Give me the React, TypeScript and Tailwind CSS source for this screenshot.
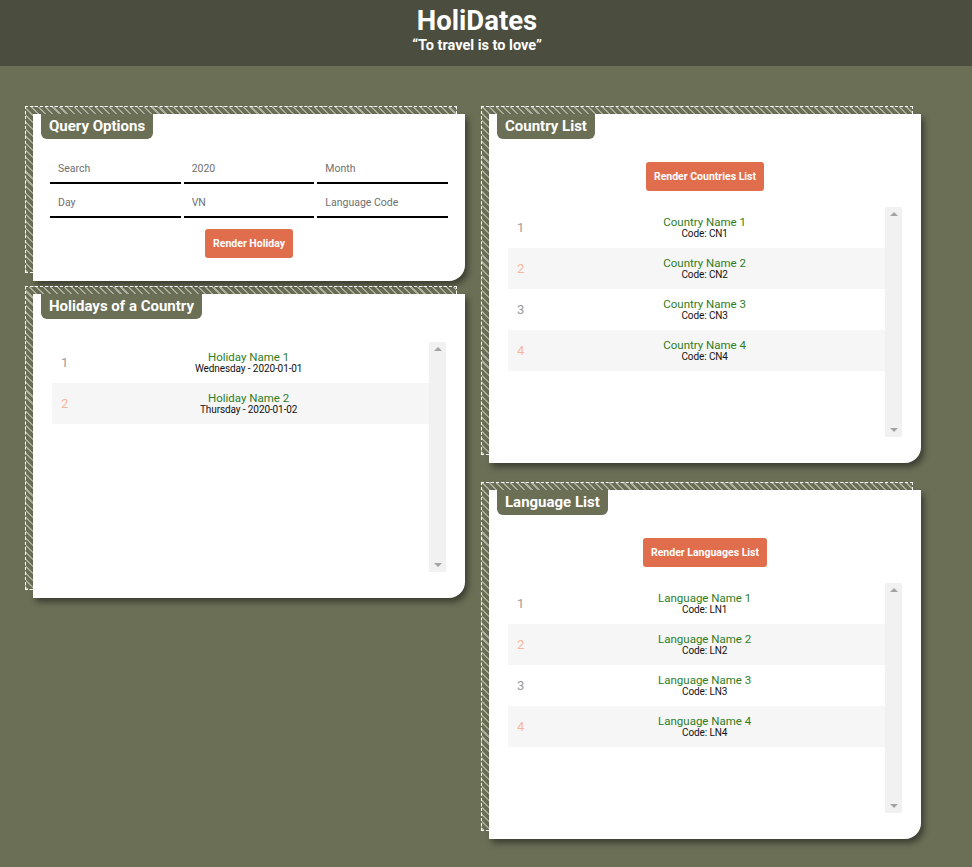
import React from 'react';

type Item = { name: string; sub: string };

const holidays: Item[] = [
  { name: 'Holiday Name 1', sub: 'Wednesday - 2020-01-01' },
  { name: 'Holiday Name 2', sub: 'Thursday - 2020-01-02' },
];

const countries: Item[] = [1, 2, 3, 4].map((n) => ({ name: `Country Name ${n}`, sub: `Code: CN${n}` }));
const languages: Item[] = [1, 2, 3, 4].map((n) => ({ name: `Language Name ${n}`, sub: `Code: LN${n}` }));

const Panel: React.FC<{ title: string; className?: string; children: React.ReactNode }> = ({ title, className = '', children }) => (
  <div className={`relative w-[432px] ${className}`}>
    {/* hatched dashed frame sitting behind the card */}
    <div className="absolute -top-2 -left-2 right-2 bottom-2 border border-dashed border-white bg-[repeating-linear-gradient(45deg,rgba(255,255,255,0.45)_0px,rgba(255,255,255,0.45)_1.5px,transparent_1.5px,transparent_5px)]" />
    <div className="relative h-full bg-white rounded-br-[16px] shadow-[3px_4px_6px_rgba(0,0,0,0.45)] flex flex-col">
      <div className="ml-2 self-start h-[25px] px-2 flex items-center bg-[#6b6f56] rounded-b-[6px] text-white font-bold text-[15px] leading-none">
        {title}
      </div>
      {children}
    </div>
  </div>
);

const List: React.FC<{ items: Item[] }> = ({ items }) => (
  <div className="mx-[19px] h-[230px] flex">
    <div className="flex-1">
      {items.map((it, i) => (
        <div key={i} className={`h-[41px] flex items-center ${i % 2 === 1 ? 'bg-[#f6f6f6]' : ''}`}>
          <span className={`pl-[9px] text-[13px] ${i % 2 === 1 ? 'text-[#f8b79c]' : 'text-[#9a9a9a]'}`}>{i + 1}</span>
          <div className="flex-1 text-center leading-[12px]">
            <div className="text-[11.5px] text-[#2e7d1e]">{it.name}</div>
            <div className="text-[10px] tracking-[-0.1px] text-[#111]">{it.sub}</div>
          </div>
        </div>
      ))}
    </div>
    <div className="w-[17px] bg-[#f1f1f1] flex flex-col items-center justify-between py-[5px]">
      <div className="w-0 h-0 border-x-[4px] border-x-transparent border-b-[4px] border-b-[#a3a3a3]" />
      <div className="w-0 h-0 border-x-[4px] border-x-transparent border-t-[4px] border-t-[#a3a3a3]" />
    </div>
  </div>
);

const Btn: React.FC<{ children: React.ReactNode }> = ({ children }) => (
  <button className="self-center h-[29px] px-2 bg-[#e06d4c] text-white font-bold text-[10.5px] rounded-[3px]">{children}</button>
);

export default function App() {
  return (
    <div className="min-h-[867px] bg-[#6b6f56] font-['Roboto','Liberation_Sans',sans-serif]">
      <header className="h-[66px] bg-[#4b4d3f] flex flex-col items-center pt-[5px] pr-[18px] text-white">
        <h1 className="text-[27.5px] font-bold leading-[32px]">HoliDates</h1>
        <p className="text-[14.5px] font-bold leading-[17px]">“To travel is to love”</p>
      </header>

      <div className="flex gap-[24px] pl-[33px] pt-[48px]">
        <div className="flex flex-col gap-[13px]">
          <Panel title="Query Options" className="h-[167px]">
            <div className="mx-[17px] mt-[13px] grid grid-cols-3 gap-x-[3px] gap-y-[2px]">
              {['Search', '2020', 'Month', 'Day', 'VN', 'Language Code'].map((p) => (
                <input
                  key={p}
                  placeholder={p}
                  className="h-[32px] pl-2 pt-[3px] border-b-2 border-black text-[10.5px] text-[#333] placeholder:text-[#6f6f6f] outline-none"
                />
              ))}
            </div>
            <div className="mt-[11px] flex justify-center">
              <Btn>Render Holiday</Btn>
            </div>
          </Panel>

          <Panel title="Holidays of a Country" className="h-[304px]">
            <div className="mt-[23px]">
              <List items={holidays} />
            </div>
          </Panel>
        </div>

        <div className="flex flex-col gap-[27px]">
          <Panel title="Country List" className="h-[349px]">
            <div className="mt-[23px] flex justify-center">
              <Btn>Render Countries List</Btn>
            </div>
            <div className="mt-[16px]">
              <List items={countries} />
            </div>
          </Panel>

          <Panel title="Language List" className="h-[349px]">
            <div className="mt-[23px] flex justify-center">
              <Btn>Render Languages List</Btn>
            </div>
            <div className="mt-[16px]">
              <List items={languages} />
            </div>
          </Panel>
        </div>
      </div>
    </div>
  );
}
